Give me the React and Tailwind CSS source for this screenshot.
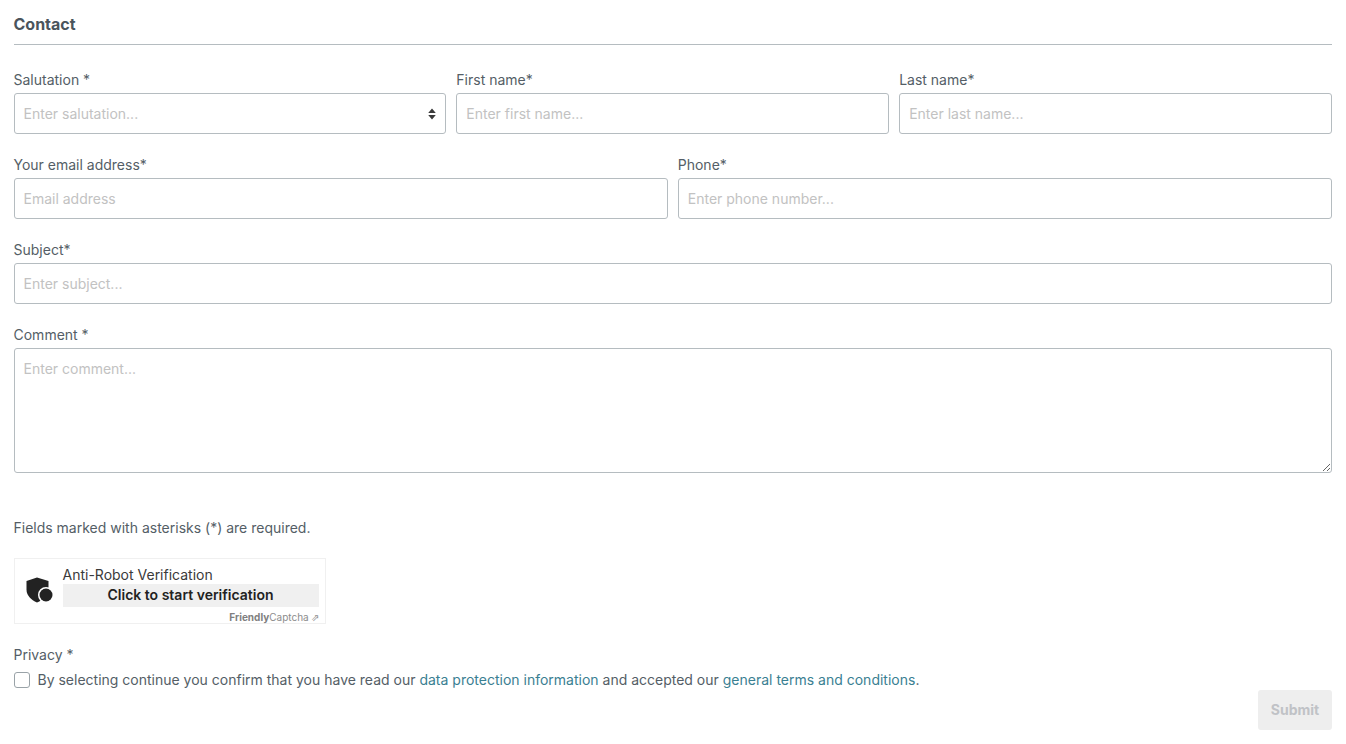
import React from "react";

const inputClass =
  "block w-full h-[41px] rounded-[3px] border border-[#b5bcc0] bg-white px-[9px] text-sm text-[#4e5860] placeholder:text-[#c2c2c2] outline-none";

function Field({ label, children }) {
  return (
    <div className="min-w-0 flex-1">
      <label className="block h-[27px] pt-[4px] text-sm leading-[20px] text-[#545e66]">
        {label}
      </label>
      {children}
    </div>
  );
}

function CaptchaLogo() {
  return (
    <svg width="28" height="28" viewBox="0 0 28 28" className="shrink-0">
      <path
        d="M12 0.5 L23.5 4 V13 C23.5 18.5 18 23 12 25.5 C6 23 1.5 18.5 1.5 12.5 V4 Z"
        fill="#222222"
      />
      <circle cx="21" cy="18" r="8" fill="#ffffff" />
      <circle cx="21" cy="18" r="6.5" fill="#222222" />
    </svg>
  );
}

export default function App() {
  return (
    <div className="h-[744px] overflow-hidden bg-white pr-[14px] pl-[13.5px] font-['Inter',sans-serif] text-[#545e66]">
      <h2 className="h-[45px] border-b border-[#b5bcc0] pt-[14px] text-base leading-[20px] font-bold text-[#4a545c]">
        Contact
      </h2>

      <div className="mt-[21px] flex gap-[10px]">
        <Field label="Salutation *">
          <div className="relative">
            <input className={inputClass} placeholder="Enter salutation..." />
            <svg
              width="8"
              height="12"
              viewBox="0 0 8 12"
              className="absolute top-[15px] right-[10px]"
            >
              <path d="M4 0.5 L7.8 5 H0.2 Z M0.2 7 H7.8 L4 11.5 Z" fill="#3a3a3a" />
            </svg>
          </div>
        </Field>
        <Field label="First name*">
          <input className={inputClass} placeholder="Enter first name..." />
        </Field>
        <Field label="Last name*">
          <input className={inputClass} placeholder="Enter last name..." />
        </Field>
      </div>

      <div className="mt-[17px] flex gap-[10px]">
        <Field label="Your email address*">
          <input className={inputClass} placeholder="Email address" />
        </Field>
        <Field label="Phone*">
          <input className={inputClass} placeholder="Enter phone number..." />
        </Field>
      </div>

      <div className="mt-[17px]">
        <Field label="Subject*">
          <input className={inputClass} placeholder="Enter subject..." />
        </Field>
      </div>

      <div className="mt-[17px]">
        <Field label="Comment *">
          <textarea
            className="block h-[125px] w-full rounded-[3px] border border-[#b5bcc0] bg-white px-[9px] py-[10px] text-sm leading-[20px] text-[#4e5860] outline-none placeholder:text-[#c2c2c2]"
            placeholder="Enter comment..."
          />
        </Field>
      </div>

      <p className="mt-[45px] text-sm leading-[20px]">
        Fields marked with asterisks (*) are required.
      </p>

      <div className="mt-[20px] flex h-[66px] w-[312px] border border-[#f0f0f0] bg-white pr-[6px] text-[#222222]">
        <div className="flex w-[48px] items-center justify-center">
          <CaptchaLogo />
        </div>
        <div className="flex-1">
          <div className="h-[25px] pt-[6px] text-sm leading-[20px] text-[#3a3a3a]">
            Anti-Robot Verification
          </div>
          <div className="h-[23px] bg-[#f0f0f0] text-center text-sm leading-[21px] font-semibold">
            Click to start verification
          </div>
          <div className="mt-[4px] -mr-px text-right text-[10px] leading-[12px] text-[#8c8c8c]">
            <span className="font-bold text-[#808080]">Friendly</span>Captcha ⇗
          </div>
        </div>
      </div>

      <div className="mt-[21px] text-sm leading-[20px]">Privacy *</div>
      <div className="mt-[5px] flex items-center text-sm leading-[20px]">
        <span className="mr-[8px] block h-[16px] w-[16px] rounded-[3px] border border-[#9aa3a8] bg-white" />
        <span>
          By selecting continue you confirm that you have read our{" "}
          <a className="text-[#3a8092]">data protection information</a> and accepted our{" "}
          <a className="text-[#3a8092]">general terms and conditions</a>.
        </span>
      </div>

      <div className="flex justify-end">
        <button className="h-[40px] w-[74px] rounded-[3px] bg-[#eeeeee] text-sm font-bold text-[#c0c2c6]">
          Submit
        </button>
      </div>
    </div>
  );
}
